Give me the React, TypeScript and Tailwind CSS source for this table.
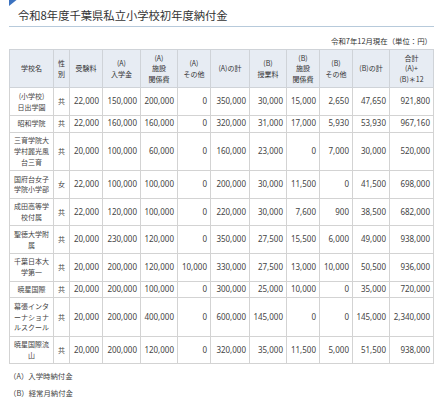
import React from "react";

type Row = { name: React.ReactNode; sex: string; v: string[] };

const rows: Row[] = [
  { name: <>(小学校)<br />日出学園</>, sex: "共", v: ["22,000", "150,000", "200,000", "0", "350,000", "30,000", "15,000", "2,650", "47,650", "921,800"] },
  { name: <>昭和学院</>, sex: "共", v: ["22,000", "160,000", "160,000", "0", "320,000", "31,000", "17,000", "5,930", "53,930", "967,160"] },
  { name: <>三育学院大<br />学村麗光風<br />台三育</>, sex: "共", v: ["20,000", "100,000", "60,000", "0", "160,000", "23,000", "0", "7,000", "30,000", "520,000"] },
  { name: <>国府台女子<br />学院小学部</>, sex: "女", v: ["22,000", "100,000", "100,000", "0", "200,000", "30,000", "11,500", "0", "41,500", "698,000"] },
  { name: <>成田高等学<br />校付属</>, sex: "共", v: ["22,000", "120,000", "100,000", "0", "220,000", "30,000", "7,600", "900", "38,500", "682,000"] },
  { name: <>聖徳大学附<br />属</>, sex: "共", v: ["20,000", "230,000", "120,000", "0", "350,000", "27,500", "15,500", "6,000", "49,000", "938,000"] },
  { name: <>千葉日本大<br />学第一</>, sex: "共", v: ["20,000", "200,000", "120,000", "10,000", "330,000", "27,500", "13,000", "10,000", "50,500", "936,000"] },
  { name: <>暁星国際</>, sex: "共", v: ["20,000", "200,000", "100,000", "0", "300,000", "25,000", "10,000", "0", "35,000", "720,000"] },
  { name: <>幕張インタ<br />ーナショナ<br />ルスクール</>, sex: "共", v: ["20,000", "200,000", "400,000", "0", "600,000", "145,000", "0", "0", "145,000", "2,340,000"] },
  { name: <>暁星国際流<br />山</>, sex: "共", v: ["20,000", "200,000", "120,000", "0", "320,000", "35,000", "11,500", "5,000", "51,500", "938,000"] },
];

const widths = [44, 16, 33, 38, 37, 33, 39, 37, 33, 33, 37, 44];

const headers: React.ReactNode[] = [
  <>学校名</>,
  <>性<br />別</>,
  <>受験料</>,
  <>(A)<br />入学金</>,
  <>(A)<br />施設<br />関係費</>,
  <>(A)<br />その他</>,
  <>(A)の計</>,
  <>(B)<br />授業料</>,
  <>(B)<br />施設<br />関係費</>,
  <>(B)<br />その他</>,
  <>(B)の計</>,
  <>合計<br />(A)+<br />(B)＊12</>,
];

const cjk = { fontFamily: '"Noto Sans CJK JP", "Noto Sans", sans-serif' };
const num = { fontFamily: '"Noto Sans", "Noto Sans CJK JP", sans-serif' };

export default function App() {
  return (
    <div className="w-[440px] h-[401px] bg-white text-[#333] overflow-hidden" style={cjk}>
      <div className="relative ml-[9px] w-[425px] border-b border-[#b7cadb] pt-[7px] pb-[3px]">
        <svg className="absolute left-0 top-0" width="8" height="6" viewBox="0 0 8 6">
          <polygon points="0,0 7.5,0 0,6" fill="#3b72c0" />
        </svg>
        <div className="pl-[9px] text-[11.3px] leading-[16px] text-[#333]">令和8年度千葉県私立小学校初年度納付金</div>
      </div>
      <div className="px-[9px] w-[442px]">
        <div className="mt-[9px] pr-[1px] text-right text-[7.4px] leading-[10px] text-[#333]">令和7年12月現在（単位：円）</div>
        <table className="mt-[3px] w-[424px] table-fixed border-collapse">
          <colgroup>
            {widths.map((w, i) => (
              <col key={i} style={{ width: w }} />
            ))}
          </colgroup>
          <thead>
            <tr>
              {headers.map((h, i) => (
                <th
                  key={i}
                  className="border border-[#cfd3d8] bg-[#e7ecf3] px-0 py-[2.5px] text-center align-middle text-[7px] font-normal leading-[10.8px] text-[#333]"
                >
                  {h}
                </th>
              ))}
            </tr>
          </thead>
          <tbody>
            {rows.map((r, ri) => (
              <tr key={ri}>
                <td className="border border-[#d3d3d3] px-0 py-[2.5px] text-center align-middle text-[7px] leading-[10.8px] text-[#444]">
                  {r.name}
                </td>
                <td className="border border-[#d3d3d3] px-0 py-[2.5px] text-center align-middle text-[7px] leading-[10.8px] text-[#444]">
                  {r.sex}
                </td>
                {r.v.map((x, i) => (
                  <td
                    key={i}
                    className="border border-[#d3d3d3] pl-0 pr-[3px] py-[2.5px] text-right align-middle text-[8px] leading-[10.8px] text-[#444] whitespace-nowrap"
                    style={num}
                  >
                    {x}
                  </td>
                ))}
              </tr>
            ))}
          </tbody>
        </table>
        <div className="mt-[6px] text-[7.4px] leading-[11px] text-[#444]">（A）入学時納付金</div>
        <div className="mt-[6px] text-[7.4px] leading-[11px] text-[#444]">（B）経常月納付金</div>
      </div>
    </div>
  );
}
